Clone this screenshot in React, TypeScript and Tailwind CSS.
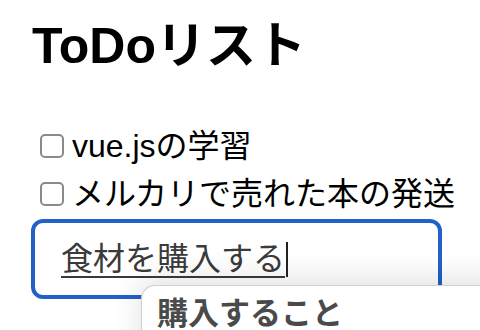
const todos = ['vue.jsの学習', 'メルカリで売れた本の発送']

function Checkbox() {
  return <span className="block h-6 w-6 shrink-0 rounded-[5px] border-2 border-[#8a8a8a] bg-white" />
}

export default function App() {
  return (
    <div className="relative h-[330px] w-[480px] overflow-hidden bg-white font-['Liberation_Sans','Noto_Sans_CJK_JP',sans-serif] text-black">
      <div className="px-[32px]">
        <h1 className="mt-[21px] text-[50px] font-bold leading-[50px]">ToDoリスト</h1>

        {/* todo list */}
        <ul className="mt-[51px]">
          {todos.map((todo) => (
            <li key={todo} className="flex h-12 items-center gap-2 whitespace-nowrap pl-2 text-[32px] leading-[48px]">
              <Checkbox />
              <span>{todo}</span>
            </li>
          ))}
        </ul>

        {/* input, mid-composition */}
        <div className="-ml-px mt-px flex h-[80px] w-[411px] items-center rounded-[12px] border-4 border-[#2161c9] pl-[26px]">
          <span className="whitespace-nowrap text-[32px] leading-none text-[#3a3a3a] underline decoration-[#3a3a3a] decoration-2 underline-offset-[6px]">
            食材を購入する
          </span>
          <span className="ml-px h-[35px] w-[2px] bg-[#222]" />
        </div>
      </div>

      {/* IME candidate window */}
      <div className="absolute left-[141px] top-[285px] h-[120px] w-[400px] rounded-tl-[14px] border-l border-t border-[#cfcfcf] bg-white pl-[15px] pt-[8px] shadow-[0_-6px_30px_rgba(0,0,0,0.12)]">
        <span className="whitespace-nowrap text-[31px] font-bold leading-[40px] text-[#4a4a4a]">購入すること</span>
      </div>
    </div>
  )
}
